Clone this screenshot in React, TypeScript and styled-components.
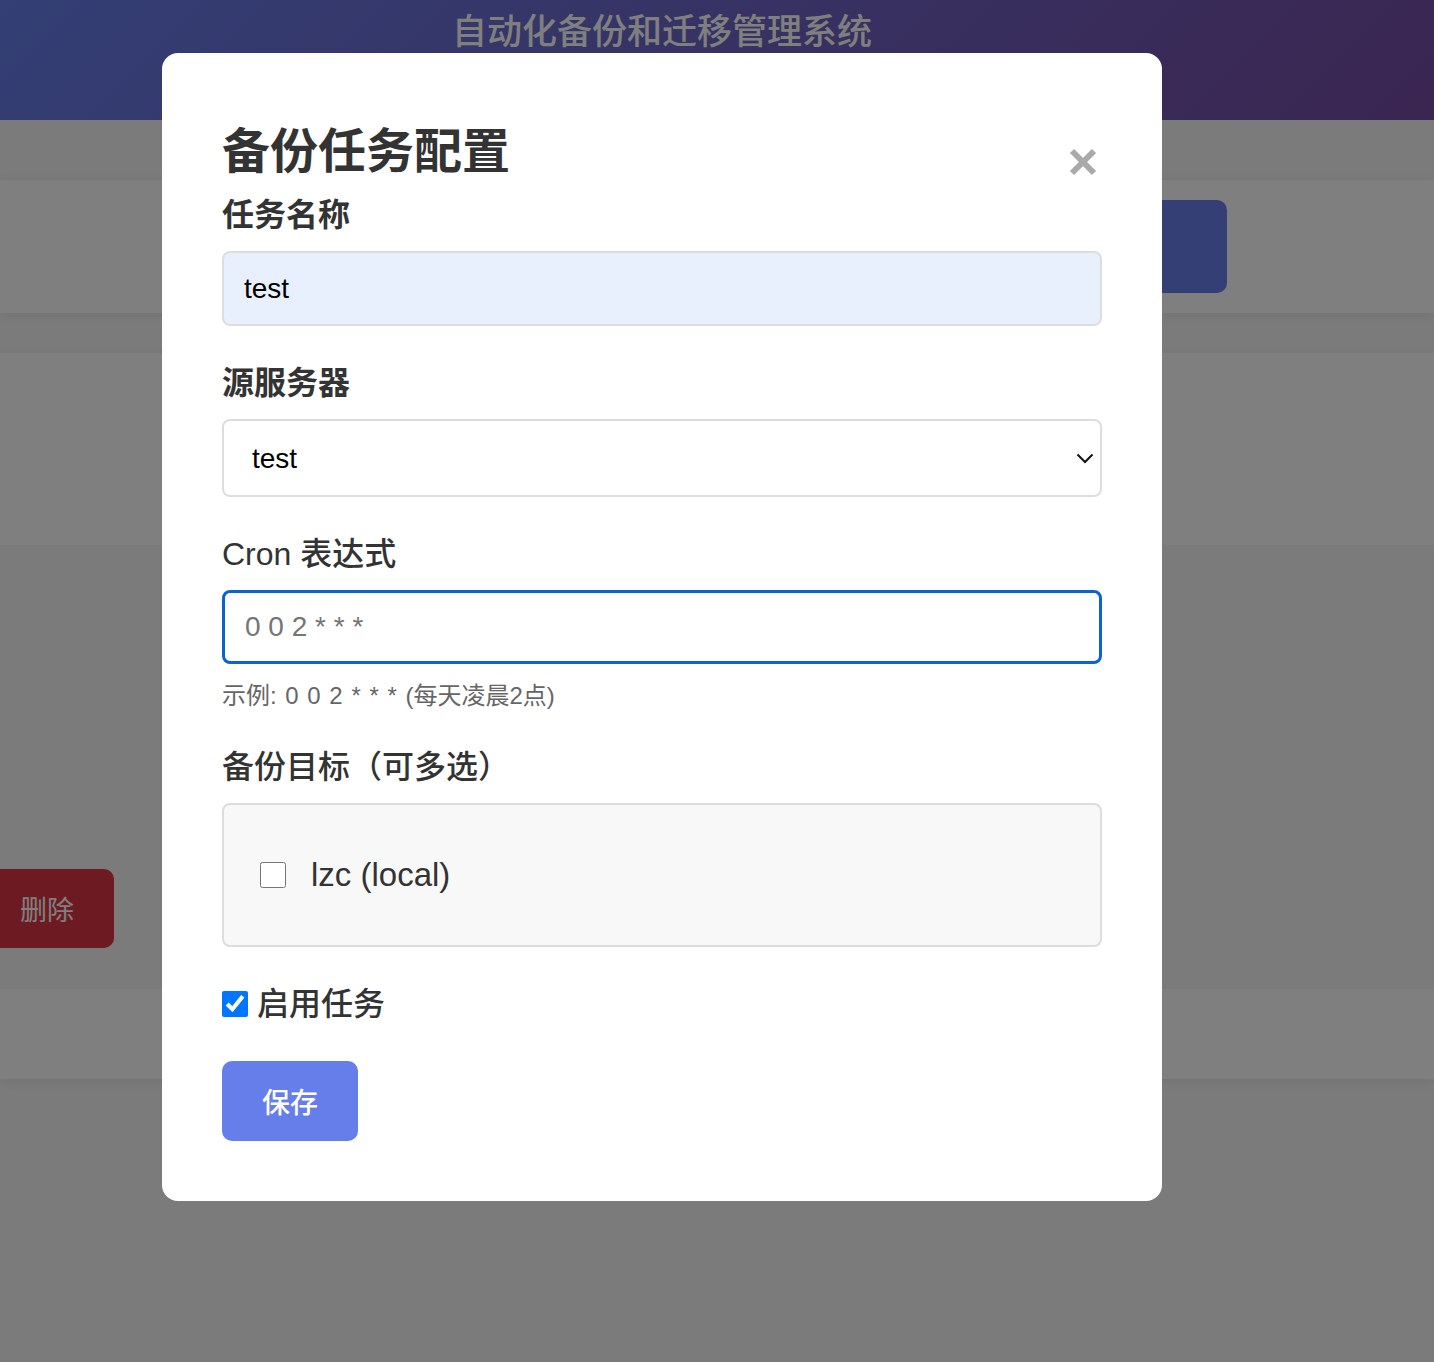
import React from "react";
import styled, { createGlobalStyle } from "styled-components";

const GlobalStyle = createGlobalStyle`
    html, body {
        margin: 0;
        padding: 0;
        background: #f6f6f6;
        font-family: "Liberation Sans", "Noto Sans CJK SC", sans-serif;
    }
    * {
        box-sizing: border-box;
    }
`;

/* page behind the dialog */
const Header = styled.header`
    height: 120px;
    background: linear-gradient(135deg, #667eea 0%, #764ba2 100%);
    padding: 11px 110px 0 0;
    text-align: center;
`;

const HeaderTitle = styled.h1`
    margin: 0;
    font-size: 35px;
    line-height: 42px;
    font-weight: 500;
    color: #ffffff;
`;

const Main = styled.main`
    padding-top: 60px;
`;

const Card = styled.section`
    background: #ffffff;
    box-shadow: 0 2px 10px rgba(0, 0, 0, 0.08);
    margin-bottom: 40px;
`;

const Toolbar = styled(Card)`
    height: 133px;
    display: flex;
    justify-content: flex-end;
    align-items: center;
    padding-right: 207px;
`;

const PrimaryButton = styled.button`
    width: 200px;
    height: 93px;
    border: none;
    border-radius: 10px;
    background: #667eea;
    color: #ffffff;
    font-size: 28px;
    font-family: inherit;
`;

const TableTop = styled.div`
    height: 192px;
`;

const TableRow = styled.div<{ $shade?: boolean; $height: number }>`
    height: ${(p) => p.$height}px;
    background: ${(p) => (p.$shade ? "#f6f6f6" : "#ffffff")};
    display: flex;
    align-items: flex-end;
    padding-bottom: 41px;
`;

const DangerButton = styled.button`
    width: 114px;
    height: 79px;
    border: none;
    border-radius: 0 10px 10px 0;
    background: #dc3545;
    color: #ffffff;
    font-size: 27px;
    font-family: inherit;
    text-align: right;
    padding-right: 40px;
`;

/* dialog */
const Overlay = styled.div`
    position: fixed;
    inset: 0;
    background: rgba(0, 0, 0, 0.5);
    display: flex;
    justify-content: center;
    align-items: flex-start;
    padding: 53px 110px 0 0;
`;

const Modal = styled.div`
    width: 1000px;
    background: #ffffff;
    border-radius: 16px;
    padding: 60px;
`;

const ModalHeader = styled.div`
    display: flex;
    justify-content: space-between;
    align-items: flex-start;
    margin-bottom: 15px;
`;

const ModalTitle = styled.h2`
    margin: 10px 0 0;
    font-size: 48px;
    line-height: 58px;
    font-weight: 700;
    color: #333333;
`;

const CloseButton = styled.button`
    border: none;
    background: none;
    padding: 0;
    margin: 34px 4px 0 0;
    width: 30px;
    height: 30px;
    cursor: pointer;
    display: flex;
`;

const FormGroup = styled.div`
    margin-bottom: 38px;
`;

const Label = styled.label<{ $weight?: number }>`
    display: block;
    font-size: 32px;
    line-height: 38px;
    font-weight: ${(p) => p.$weight ?? 700};
    color: #333333;
    margin-bottom: 17px;
`;

const TextInput = styled.input<{ $focused?: boolean; $filled?: boolean }>`
    display: block;
    width: 100%;
    height: ${(p) => (p.$focused ? 74 : 75)}px;
    padding: 0 20px;
    font-size: 28px;
    font-family: inherit;
    color: #000000;
    background: ${(p) => (p.$filled ? "#e8f0fe" : "#ffffff")};
    border: ${(p) => (p.$focused ? "3px solid #0b63ce" : "2px solid #dddddd")};
    border-radius: 8px;
    outline: none;
    &::placeholder {
        color: #757575;
    }
`;

const SelectWrap = styled.div`
    position: relative;
`;

const Select = styled.select`
    display: block;
    width: 100%;
    height: 78px;
    padding: 0 28px;
    font-size: 28px;
    font-family: inherit;
    color: #000000;
    background: #ffffff;
    border: 2px solid #dddddd;
    border-radius: 8px;
    appearance: none;
    outline: none;
`;

const Chevron = styled.svg`
    position: absolute;
    right: 8px;
    top: 33px;
    pointer-events: none;
`;

const Hint = styled.div`
    margin-top: 17px;
    font-size: 24px;
    line-height: 29px;
    color: #666666;
    word-spacing: 2px;
`;

const TargetBox = styled.div`
    height: 144px;
    background: #f8f8f8;
    border: 2px solid #dddddd;
    border-radius: 8px;
    padding: 0 36px;
    display: flex;
    align-items: center;
`;

const CheckRow = styled.label<{ $gap: number; $size: number }>`
    display: flex;
    align-items: center;
    gap: ${(p) => p.$gap}px;
    font-size: ${(p) => p.$size}px;
    line-height: 38px;
    font-weight: 500;
    color: #333333;
`;

const Checkbox = styled.input`
    width: 26px;
    height: 26px;
    margin: 0;
    accent-color: #0075ff;
`;

const SaveButton = styled.button`
    width: 136px;
    height: 80px;
    border: none;
    border-radius: 10px;
    background: #667eea;
    color: #ffffff;
    font-size: 28px;
    font-family: inherit;
    font-weight: 500;
`;

const App = () => {
    return (
        <>
            <GlobalStyle />
            <Header>
                <HeaderTitle>自动化备份和迁移管理系统</HeaderTitle>
            </Header>
            <Main>
                <Toolbar>
                    <PrimaryButton>添加</PrimaryButton>
                </Toolbar>
                <Card>
                    <TableTop />
                    <TableRow $shade $height={444}>
                        <DangerButton>删除</DangerButton>
                    </TableRow>
                    <TableRow $height={90} />
                </Card>
            </Main>

            <Overlay>
                <Modal>
                    <ModalHeader>
                        <ModalTitle>备份任务配置</ModalTitle>
                        <CloseButton aria-label="关闭">
                            <svg width="30" height="30" viewBox="0 0 30 30">
                                <path
                                    d="M4 4 L26 26 M26 4 L4 26"
                                    stroke="#aaaaaa"
                                    strokeWidth="6"
                                />
                            </svg>
                        </CloseButton>
                    </ModalHeader>

                    <FormGroup>
                        <Label>任务名称</Label>
                        <TextInput $filled defaultValue="test" />
                    </FormGroup>

                    <FormGroup>
                        <Label>源服务器</Label>
                        <SelectWrap>
                            <Select defaultValue="test">
                                <option value="test">test</option>
                            </Select>
                            <Chevron width="18" height="12" viewBox="0 0 18 12">
                                <path
                                    d="M1.5 2.5 L9 10 L16.5 2.5"
                                    fill="none"
                                    stroke="#111111"
                                    strokeWidth="2"
                                />
                            </Chevron>
                        </SelectWrap>
                    </FormGroup>

                    <FormGroup>
                        <Label $weight={500}>Cron 表达式</Label>
                        <TextInput $focused placeholder="0 0 2 * * *" />
                        <Hint>示例: 0 0 2 * * * (每天凌晨2点)</Hint>
                    </FormGroup>

                    <FormGroup>
                        <Label $weight={500}>备份目标（可多选）</Label>
                        <TargetBox>
                            <CheckRow $gap={25} $size={33}>
                                <Checkbox type="checkbox" />
                                lzc (local)
                            </CheckRow>
                        </TargetBox>
                    </FormGroup>

                    <FormGroup>
                        <CheckRow $gap={9} $size={32}>
                            <Checkbox type="checkbox" defaultChecked />
                            启用任务
                        </CheckRow>
                    </FormGroup>

                    <SaveButton>保存</SaveButton>
                </Modal>
            </Overlay>
        </>
    );
};

export default App;
